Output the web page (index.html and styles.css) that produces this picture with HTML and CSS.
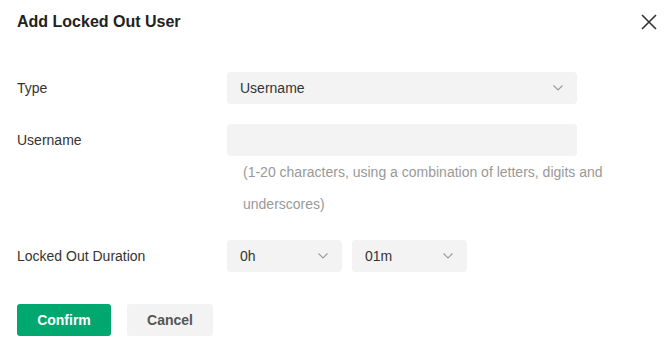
FILE: index.html
```html
<!DOCTYPE html>
<html lang="en">
<head>
  <meta charset="UTF-8">
  <title>Add Locked Out User</title>
  <link rel="stylesheet" href="styles.css">
</head>
<body>
  <div class="dialogo">
    <div class="cabecalho">
      <h2>Add Locked Out User</h2>
      <button class="fechar" aria-label="Close">
        <svg width="16" height="16" viewBox="0 0 16 16"><path d="M1 1L15 15M15 1L1 15" stroke="#333" stroke-width="1.6" fill="none"/></svg>
      </button>
    </div>

    <div class="linha">
      <label>Type</label>
      <div class="campo">
        <div class="seletor largo">
          <span>Username</span>
          <svg class="seta" width="10" height="6" viewBox="0 0 10 6"><path d="M0.5 0.5L5 5L9.5 0.5" stroke="#999" stroke-width="1.1" fill="none"/></svg>
        </div>
      </div>
    </div>

    <div class="linha">
      <label>Username</label>
      <div class="campo">
        <div class="entrada"></div>
        <p class="dica">(1-20 characters, using a combination of letters, digits and underscores)</p>
      </div>
    </div>

    <div class="linha">
      <label>Locked Out Duration</label>
      <div class="campo duplo">
        <div class="seletor curto">
          <span>0h</span>
          <svg class="seta" width="10" height="6" viewBox="0 0 10 6"><path d="M0.5 0.5L5 5L9.5 0.5" stroke="#999" stroke-width="1.1" fill="none"/></svg>
        </div>
        <div class="seletor curto">
          <span>01m</span>
          <svg class="seta" width="10" height="6" viewBox="0 0 10 6"><path d="M0.5 0.5L5 5L9.5 0.5" stroke="#999" stroke-width="1.1" fill="none"/></svg>
        </div>
      </div>
    </div>

    <div class="botoes">
      <button id="confirmar">Confirm</button>
      <button id="cancelar">Cancel</button>
    </div>
  </div>
</body>
</html>
```

FILE: styles.css
```css
body {
  font-family: "Liberation Sans", Arial, sans-serif;
  background: white;
  margin: 0;
  color: #333;
}

.dialogo {
  width: 664px;
  height: 363px;
  padding: 0 0 0 17px;
  box-sizing: border-box;
}

.cabecalho {
  display: flex;
  justify-content: space-between;
  align-items: center;
  padding-top: 11px;
  height: 21px;
  margin-bottom: 40px;
}

h2 {
  font-size: 16px;
  line-height: 21px;
  color: #222;
  margin: 0;
}

.fechar {
  background: none;
  border: none;
  padding: 0;
  margin-right: 7px;
  width: 16px;
  height: 16px;
  cursor: pointer;
  display: flex;
}

.linha {
  display: flex;
  margin-bottom: 20px;
}

.linha label {
  width: 210px;
  font-size: 14px;
  line-height: 32px;
  color: #333;
}

.campo {
  width: 350px;
}

.campo.duplo {
  display: flex;
  gap: 10px;
}

.seletor, .entrada {
  height: 32px;
  background-color: #f3f3f3;
  border-radius: 4px;
  box-sizing: border-box;
}

.seletor {
  display: flex;
  align-items: center;
  justify-content: space-between;
  padding: 0 14px 0 13px;
  font-size: 14px;
  color: #333;
}

.seletor.curto {
  width: 115px;
}

.dica {
  margin: 0;
  width: 390px;
  padding-left: 16px;
  font-size: 14px;
  line-height: 32px;
  color: #999;
}

.botoes {
  display: flex;
  gap: 16px;
  margin-top: 32px;
}

.botoes button {
  height: 32px;
  border: none;
  border-radius: 3px;
  font-family: "Liberation Sans", Arial, sans-serif;
  font-size: 14px;
  font-weight: bold;
  cursor: pointer;
}

#confirmar {
  width: 94px;
  background-color: #00a870;
  color: white;
}

#cancelar {
  width: 86px;
  background-color: #f3f3f3;
  color: #555;
}
```
